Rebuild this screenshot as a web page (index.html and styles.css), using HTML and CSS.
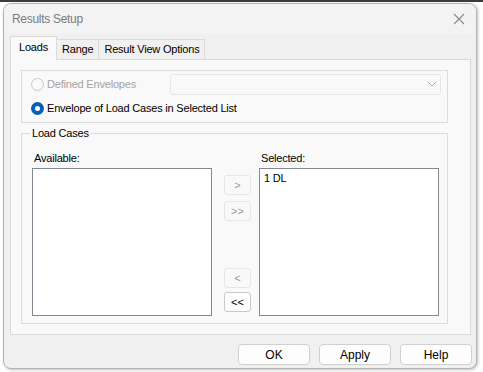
FILE: index.html
```html
<!DOCTYPE html>
<html lang="en">
<head>
  <meta charset="UTF-8">
  <title>Results Setup</title>
  <link rel="stylesheet" href="styles.css">
</head>
<body>

  <div class="dialog">
    <div class="titlebar">
      <span class="title">Results Setup</span>
      <svg class="close" width="12" height="12" viewBox="0 0 12 12">
        <path d="M1 1 L11 11 M11 1 L1 11" stroke="#8a8a8a" stroke-width="1.1" fill="none"/>
      </svg>
    </div>

    <div class="tabs">
      <div class="tab active">Loads</div>
      <div class="tab">Range</div>
      <div class="tab">Result View Options</div>
    </div>

    <div class="panel">
      <div class="group envelopes">
        <div class="row">
          <label class="radio disabled"><span class="dot"></span>Defined Envelopes</label>
          <div class="combo">
            <svg width="10" height="6" viewBox="0 0 10 6">
              <path d="M0.5 0.5 L5 5 L9.5 0.5" stroke="#a8a8a8" fill="none"/>
            </svg>
          </div>
        </div>
        <div class="row">
          <label class="radio checked"><span class="dot"></span>Envelope of Load Cases in Selected List</label>
        </div>
      </div>

      <div class="group loadcases">
        <span class="legend">Load Cases</span>
        <div class="lists">
          <div class="col">
            <div class="caption">Available:</div>
            <div class="listbox"></div>
          </div>
          <div class="movers">
            <button class="mini" disabled>&gt;</button>
            <button class="mini" disabled>&gt;&gt;</button>
            <button class="mini later" disabled>&lt;</button>
            <button class="mini">&lt;&lt;</button>
          </div>
          <div class="col">
            <div class="caption">Selected:</div>
            <div class="listbox">
              <div class="item">1 DL</div>
            </div>
          </div>
        </div>
      </div>
    </div>

    <div class="actions">
      <button class="btn">OK</button>
      <button class="btn">Apply</button>
      <button class="btn">Help</button>
    </div>
  </div>

</body>
</html>
```

FILE: styles.css
```css
body {
  margin: 0;
  padding: 3px 0 0 3px;
  background: #ffffff;
  border-top: 2px solid #3c3c3c;
  height: 367px;
  overflow: hidden;
  font-family: "Liberation Sans", Arial, sans-serif;
  font-size: 11px;
  letter-spacing: -0.2px;
  color: #000;
}
.dialog {
  width: 472px;
  height: 364px;
  margin-top: -2px;
  background: #f0f0f0;
  border: 1px solid #b4b4b4;
  border-radius: 8px;
  box-shadow: 1px 1px 3px rgba(0, 0, 0, 0.25);
  display: flex;
  flex-direction: column;
  overflow: hidden;
}
.titlebar {
  height: 30px;
  flex: none;
  display: flex;
  align-items: center;
  justify-content: space-between;
  padding: 0 11px 0 8px;
  background: #f3f3f3;
}
.title {
  color: #7b7b7b;
  font-size: 12px;
  letter-spacing: -0.3px;
}
.tabs {
  display: flex;
  align-items: flex-end;
  height: 25px;
  padding-left: 6px;
}
.tab {
  height: 19px;
  line-height: 19px;
  padding: 0 5px;
  background: #f0f0f0;
  border: 1px solid #dadada;
  border-bottom: none;
  margin-left: -1px;
}
.tab:first-child {
  margin-left: 0;
}
.tab.active {
  height: 23px;
  line-height: 21px;
  padding: 0 8px;
  background: #f9f9f9;
  position: relative;
  top: 1px;
  z-index: 1;
}
.panel {
  margin: 0 5px 0 6px;
  height: 264px;
  background: #f9f9f9;
  border: 1px solid #dadada;
  padding: 10px 22px 0 10px;
}
.group {
  border: 1px solid #dcdcdc;
  box-sizing: border-box;
}
.envelopes {
  height: 53px;
  padding: 1px 6px 0 9px;
}
.row {
  display: flex;
  align-items: center;
  height: 24px;
}
.radio {
  display: flex;
  align-items: center;
  gap: 3px;
}
.radio.disabled {
  color: #a3a3a3;
}
.dot {
  width: 11px;
  height: 11px;
  border-radius: 50%;
  border: 1px solid #c8c8c8;
  background: #f9f9f9;
  box-sizing: content-box;
}
.radio.checked .dot {
  width: 5px;
  height: 5px;
  border: 4px solid #005fb8;
  background: #fff;
}
.combo {
  margin-left: auto;
  width: 271px;
  height: 21px;
  border: 1px solid #e6e6e6;
  border-radius: 3px;
  background: #f9f9f9;
  display: flex;
  align-items: center;
  justify-content: flex-end;
  padding-right: 3px;
  box-sizing: border-box;
}
.loadcases {
  position: relative;
  margin-top: 10px;
  height: 191px;
  padding: 18px 0 0 10px;
}
.legend {
  position: absolute;
  top: -8px;
  left: 8px;
  padding: 0 2px;
  line-height: 14px;
  background: #f9f9f9;
}
.lists {
  display: flex;
}
.caption {
  height: 13px;
  line-height: 13px;
  padding-left: 2px;
  margin-bottom: 3px;
}
.listbox {
  width: 180px;
  height: 148px;
  box-sizing: border-box;
  background: #fff;
  border: 1px solid #848891;
}
.item {
  padding: 3px 0 0 4px;
}
.movers {
  width: 27px;
  margin: 23px 8px 0 12px;
  display: flex;
  flex-direction: column;
  gap: 6px;
}
.mini.later {
  margin-top: 41px;
}
.mini:last-child {
  margin-top: -2px;
}
.mini {
  width: 27px;
  height: 20px;
  padding: 0;
  font: inherit;
  font-size: 11px;
  color: #000;
  background: #fdfdfd;
  border: 1px solid #c9c9c9;
  border-radius: 3px;
}
.mini:disabled {
  color: #9a9a9a;
  background: #f9f9f9;
  border-color: #e6e6e6;
}
.actions {
  display: flex;
  justify-content: flex-end;
  gap: 9px;
  padding: 9px 4px 0 0;
}
.btn {
  width: 72px;
  height: 21px;
  padding: 0;
  font: inherit;
  font-size: 12px;
  color: #000;
  background: #fdfdfd;
  border: 1px solid #d0d0d0;
  border-radius: 4px;
}
```
